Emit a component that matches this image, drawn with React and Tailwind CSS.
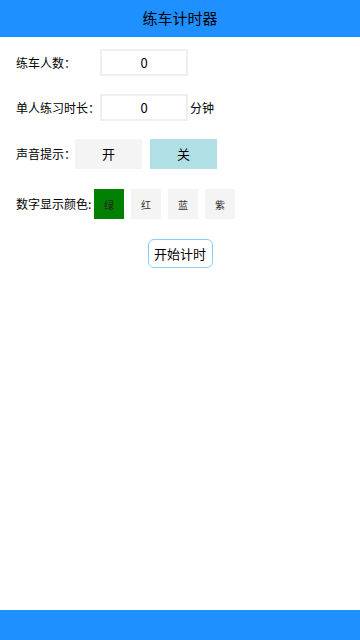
import React from "react";

export default function App() {
  const font = { fontFamily: '"Noto Sans CJK SC", "Noto Sans", sans-serif' };
  return (
    <div className="flex h-[640px] w-[360px] flex-col bg-white text-black" style={font}>
      <header className="flex h-[37px] shrink-0 items-center justify-center bg-[#1e90ff] text-[15px]">
        练车计时器
      </header>
      <main className="flex flex-1 flex-col pl-4 pt-3 text-[12px]">
        <div className="flex h-[27px] items-center">
          <span className="w-[84px] shrink-0 whitespace-nowrap">练车人数：</span>
          <div className="flex h-[27px] w-[88px] shrink-0 items-center justify-center border-2 border-[#efefef] bg-white text-[13px]">0</div>
        </div>
        <div className="mt-[18px] flex h-[27px] items-center">
          <span className="w-[84px] shrink-0 whitespace-nowrap">单人练习时长：</span>
          <div className="flex h-[27px] w-[88px] shrink-0 items-center justify-center border-2 border-[#efefef] bg-white text-[13px]">0</div>
          <span className="ml-[2px] whitespace-nowrap">分钟</span>
        </div>
        <div className="mt-[18px] flex h-[30px] items-center">
          <span className="w-[59px] shrink-0 whitespace-nowrap">声音提示：</span>
          <button className="flex h-[30px] w-[67px] shrink-0 items-center justify-center bg-[#f4f4f4] text-[13px]">开</button>
          <button className="ml-2 flex h-[30px] w-[67px] shrink-0 items-center justify-center bg-[#b0e0e6] text-[13px]">关</button>
        </div>
        <div className="mt-5 flex h-[30px] items-center">
          <span className="w-[78px] shrink-0 whitespace-nowrap">数字显示颜色:</span>
          <div className="flex gap-[7px] text-[10px]">
            <button className="flex h-[30px] w-[30px] items-center justify-center bg-[#008000] text-[#222]">绿</button>
            <button className="flex h-[30px] w-[30px] items-center justify-center bg-[#f4f4f4] text-[#333]">红</button>
            <button className="flex h-[30px] w-[30px] items-center justify-center bg-[#f4f4f4] text-[#333]">蓝</button>
            <button className="flex h-[30px] w-[30px] items-center justify-center bg-[#f4f4f4] text-[#333]">紫</button>
          </div>
        </div>
        <div className="mt-5 flex justify-center pr-4">
          <button className="flex h-[29px] w-[65px] items-center justify-center whitespace-nowrap rounded-md border border-[#87cefa] bg-white text-[13px]">开始计时</button>
        </div>
      </main>
      <footer className="h-[30px] shrink-0 bg-[#1e90ff]" />
    </div>
  );
}
